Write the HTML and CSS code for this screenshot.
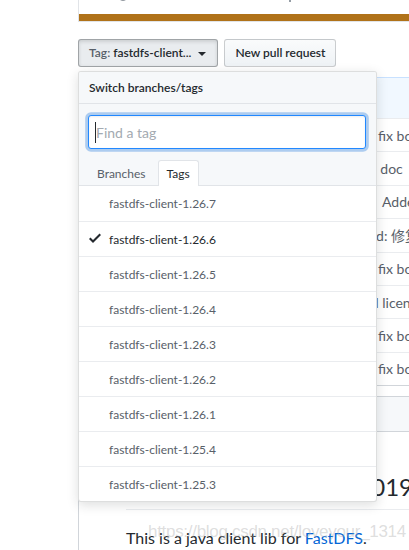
FILE: index.html
```html
<!DOCTYPE html>
<html lang="en">
<head>
<meta charset="utf-8">
<title>fastdfs-client-java</title>
<link rel="stylesheet" href="styles.css">
</head>
<body>
<div class="repo">
  <div class="summary">
    <div class="stats">
      <span class="stat stat-commits"><svg width="12" height="14" viewBox="0 0 12 14"><circle cx="6" cy="7" r="5" fill="none" stroke="#6a737d" stroke-width="1.6"/></svg></span>
      <span class="stat stat-branch"><svg width="4" height="14" viewBox="0 0 4 14"><rect x="1" y="0" width="2" height="14" fill="#959da5"/></svg></span>
    </div>
    <div class="langbar"></div>
  </div>

  <div class="actions">
    <div class="dropdown">
      <button class="btn btn-selected" type="button"><i class="btn-label">Tag:</i> <span>fastdfs-client...</span><span class="caret"></span></button>
      <div class="menu">
        <div class="menu-header">Switch branches/tags</div>
        <div class="menu-filter">
          <div class="filter-input"><span class="text-caret"></span><span class="placeholder">Find a tag</span></div>
          <div class="menu-tabs">
            <span class="tab">Branches</span>
            <span class="tab tab-selected">Tags</span>
          </div>
        </div>
        <ul class="items">
          <li class="item">fastdfs-client-1.26.7</li>
          <li class="item item-selected"><svg class="check" width="12" height="16" viewBox="0 0 12 16"><path d="M12 5l-8 8-4-4 1.5-1.5L4 10l6.5-6.5L12 5z" fill="#24292e"/></svg>fastdfs-client-1.26.6</li>
          <li class="item">fastdfs-client-1.26.5</li>
          <li class="item">fastdfs-client-1.26.4</li>
          <li class="item">fastdfs-client-1.26.3</li>
          <li class="item">fastdfs-client-1.26.2</li>
          <li class="item">fastdfs-client-1.26.1</li>
          <li class="item">fastdfs-client-1.25.4</li>
          <li class="item">fastdfs-client-1.25.3</li>
        </ul>
      </div>
    </div>
    <button class="btn" type="button">New pull request</button>
  </div>

  <div class="files">
    <div class="commit-tease">Latest commit</div>
    <div class="file-row"><span class="ficon"></span><span class="fname">src/main/java</span><span class="fmsg">fix bom</span></div>
    <div class="file-row"><span class="ficon"></span><span class="fname">src/main/resources</span><span class="fmsg msg-doc">update doc</span></div>
    <div class="file-row"><span class="ficon"></span><span class="fname">src/test</span><span class="fmsg msg-add">Added</span></div>
    <div class="file-row"><span class="ficon"></span><span class="fname">.gitignore</span><span class="fmsg msg-fixed">fixed: 修复</span></div>
    <div class="file-row"><span class="ficon"></span><span class="fname">HISTORY</span><span class="fmsg">fix bom</span></div>
    <div class="file-row"><span class="ficon"></span><span class="fname">LICENSE</span><span class="fmsg msg-lic">add license</span></div>
    <div class="file-row"><span class="ficon"></span><span class="fname">README.md</span><span class="fmsg">fix bom</span></div>
    <div class="file-row"><span class="ficon"></span><span class="fname">pom.xml</span><span class="fmsg">fix bom</span></div>
  </div>

  <div class="readme">
    <div class="readme-head">README.md</div>
    <article class="markdown">
      <h2>FastDFS java client, 2019</h2>
      <p>This is a java client lib for <a href="#">FastDFS</a>.</p>
    </article>
  </div>
</div>
<div class="watermark">https://blog.csdn.net/loveyour_1314</div>
</body>
</html>
```

FILE: styles.css
```css
html, body {
  margin: 0;
  height: 550px;
  overflow: hidden;
  background: #fff;
}
body {
  font-family: Lato, "Noto Sans", "Noto Sans CJK SC", sans-serif;
  color: #24292e;
  font-size: 14px;
  position: relative;
}
ul { margin: 0; padding: 0; list-style: none; }

.repo {
  margin-left: 78px;
  width: 980px;
}

/* summary + language bar */
.summary {
  border: 1px solid #e1e4e8;
  border-top: 0;
}
.stats {
  height: 14px;
  display: flex;
  padding-left: 38px;
}
.stat svg { display: block; margin-top: -12px; }
.stat-branch { margin-left: 159px; }
.langbar {
  height: 7px;
  background: #b07219;
}

/* buttons */
.actions {
  margin-top: 17px;
  display: flex;
  gap: 6px;
  align-items: flex-start;
}
.dropdown { position: relative; }
.btn {
  height: 28px;
  box-sizing: border-box;
  padding: 0 10px;
  font-family: inherit;
  font-size: 12px;
  font-weight: 600;
  line-height: 26px;
  color: #24292e;
  border: 1px solid rgba(27,31,35,.2);
  border-radius: 3px;
  background: linear-gradient(-180deg, #fafbfc, #eff3f6 90%);
  white-space: nowrap;
}
.btn-selected {
  background: #e9ecef;
  border-color: rgba(27,31,35,.35);
  box-shadow: inset 0 .15em .3em rgba(27,31,35,.15);
  padding: 0 11px 0 10px;
}
.btn-label {
  font-style: normal;
  color: #586069;
}
.caret {
  display: inline-block;
  vertical-align: middle;
  margin-left: 7px;
  border-top: 4px solid #24292e;
  border-left: 4px solid transparent;
  border-right: 4px solid transparent;
}

/* dropdown menu (overlay) */
.menu {
  position: absolute;
  top: calc(100% + 4px);
  left: 0;
  width: 299px;
  box-sizing: border-box;
  background: #fff;
  border: 1px solid rgba(27,31,35,.15);
  border-radius: 3px;
  box-shadow: 0 3px 12px rgba(27,31,35,.15);
  overflow: hidden;
  z-index: 10;
}
.menu-header {
  height: 32px;
  box-sizing: border-box;
  padding: 0 10px;
  line-height: 31px;
  background: #f6f8fa;
  border-bottom: 1px solid #e1e4e8;
  font-size: 12px;
  font-weight: 600;
}
.menu-filter {
  background: #f6f8fa;
  padding: 11px 10px 0 9px;
}
.filter-input {
  height: 34px;
  box-sizing: border-box;
  border: 1px solid #2188ff;
  border-radius: 3px;
  background: #fff;
  box-shadow: inset 0 1px 2px rgba(27,31,35,.075), 0 0 0 .2em rgba(3,102,214,.3);
  display: flex;
  align-items: center;
  padding-left: 6px;
  font-size: 14px;
  color: #a3aab1;
}
.text-caret {
  width: 1px;
  height: 21px;
  background: #24292e;
}
.menu-tabs {
  display: flex;
  gap: 3px;
  margin: 0 -10px 0 -9px;
  padding: 11px 9px 0;
  border-bottom: 1px solid #e1e4e8;
}
.tab {
  height: 26px;
  box-sizing: border-box;
  padding: 0 8px;
  margin-bottom: -1px;
  line-height: 25px;
  font-size: 12px;
  color: #586069;
  border: 1px solid transparent;
  border-bottom: 0;
  border-radius: 3px 3px 0 0;
}
.tab-selected {
  background: #fff;
  border-color: #e1e4e8;
  color: #24292e;
}
.item {
  position: relative;
  height: 35px;
  box-sizing: border-box;
  padding-left: 30px;
  display: flex;
  align-items: center;
  font-size: 12px;
  color: #586069;
  border-top: 1px solid #eaecef;
}
.item:first-child { border-top: 0; }
.item-selected { color: #24292e; }
.check {
  position: absolute;
  left: 10px;
  top: 8px;
}

/* file table (behind the menu) */
.files {
  margin-top: 10px;
  border: 1px solid #d1d5da;
  border-top-color: #c8e1ff;
  border-radius: 3px;
}
.commit-tease {
  height: 40px;
  box-sizing: border-box;
  padding: 0 10px;
  line-height: 40px;
  background: #f1f8ff;
  font-size: 14px;
}
.file-row {
  height: 33.4px;
  box-sizing: border-box;
  border-top: 1px solid #eaecef;
  display: grid;
  grid-template-columns: 28px 270px 1fr;
  align-items: center;
  font-size: 14px;
  white-space: nowrap;
}
.fname { color: #0366d6; }
.fmsg { color: #586069; padding-left: 1px; }
.msg-doc { text-indent: -44px; }
.msg-add { padding-left: 5px; }
.msg-fixed { text-indent: -24px; }
.msg-lic { text-indent: -22px; }

/* readme */
.readme {
  margin-top: 10px;
  border: 1px solid #d1d5da;
  border-radius: 3px;
}
.readme-head {
  height: 35px;
  box-sizing: border-box;
  padding: 0 16px;
  line-height: 34px;
  background: #f6f8fa;
  border-bottom: 1px solid #d1d5da;
  font-size: 14px;
  font-weight: 600;
}
.markdown {
  padding: 0 45px 0 47px;
}
.markdown h2 {
  margin: 40px 0 16px;
  padding-bottom: .3em;
  font-size: 24px;
  font-weight: 400;
  line-height: 1.25;
  border-bottom: 1px solid #eaecef;
  text-align: right;
  width: 287px;
  padding-right: 400px;
  white-space: nowrap;
}
.markdown p {
  margin: 0 0 16px;
  font-size: 16px;
  line-height: 1.5;
}
.markdown a { color: #0366d6; text-decoration: none; }

.watermark {
  position: absolute;
  left: 148px;
  top: 522px;
  font-family: "Liberation Sans", sans-serif;
  font-size: 17px;
  letter-spacing: -0.3px;
  color: rgba(170,170,170,.4);
  pointer-events: none;
}
```
